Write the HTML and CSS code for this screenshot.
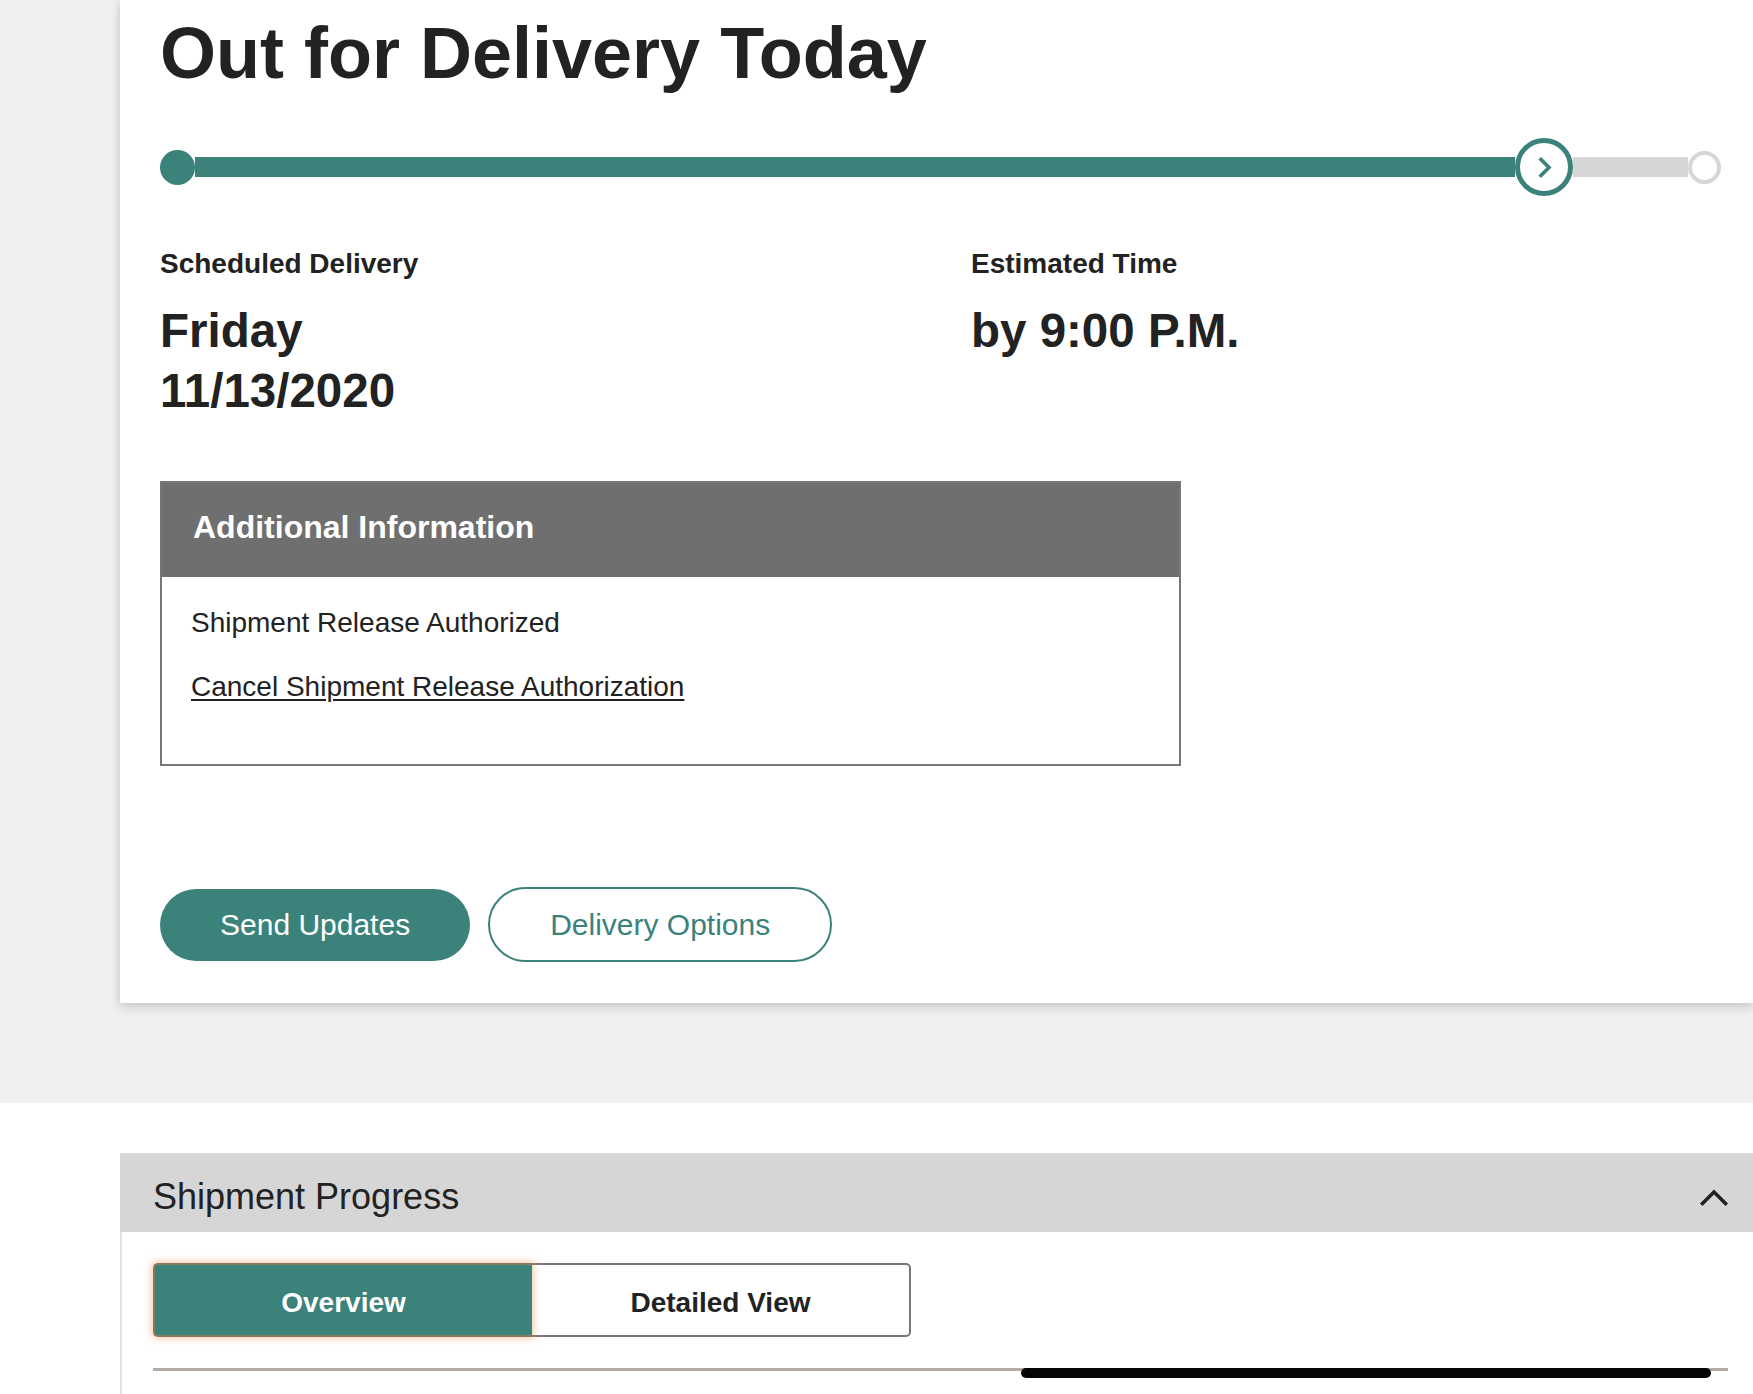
FILE: index.html
```html
<!DOCTYPE html>
<html lang="en">
<head>
<meta charset="utf-8">
<title>Track Shipment</title>
<link rel="stylesheet" href="styles.css">
</head>
<body>
  <div class="top-band">
    <section class="status-card">
      <h1 class="status-title">Out for Delivery Today</h1>

      <div class="tracker">
        <span class="dot dot-start"></span>
        <span class="bar bar-done"></span>
        <span class="dot dot-current">
          <svg class="dot-chevron" viewBox="0 0 48 48" width="48" height="48" aria-hidden="true">
            <polyline points="21,16.5 29,24.5 21,32.5" fill="none" stroke="#3a827a" stroke-width="3.6" stroke-linecap="square" stroke-linejoin="miter"/>
          </svg>
        </span>
        <span class="bar bar-todo"></span>
        <span class="dot dot-end"></span>
      </div>

      <div class="delivery-info">
        <div class="info-col">
          <h2 class="info-label">Scheduled Delivery</h2>
          <p class="info-value">Friday<br>11/13/2020</p>
        </div>
        <div class="info-col">
          <h2 class="info-label">Estimated Time</h2>
          <p class="info-value">by 9:00 P.M.</p>
        </div>
      </div>

      <div class="notice">
        <div class="notice-head">Additional Information</div>
        <div class="notice-body">
          <p class="notice-text">Shipment Release Authorized</p>
          <p class="notice-text notice-link-row"><a class="notice-link" href="#">Cancel Shipment Release Authorization</a></p>
        </div>
      </div>

      <div class="actions">
        <button class="btn btn-primary" type="button">Send Updates</button>
        <button class="btn btn-outline" type="button">Delivery Options</button>
      </div>
    </section>
  </div>

  <section class="progress-section">
    <div class="accordion">
      <div class="accordion-head">
        <span class="accordion-title">Shipment Progress</span>
        <svg class="accordion-icon" viewBox="0 0 30 20" width="30" height="20" aria-hidden="true">
          <polyline points="3.5,15.5 15,4 26.5,15.5" fill="none" stroke="#222" stroke-width="3.6" stroke-linecap="square" stroke-linejoin="miter"/>
        </svg>
      </div>
      <div class="accordion-body">
        <div class="tabs">
          <button class="tab tab-active" type="button">Overview</button>
          <button class="tab tab-plain" type="button">Detailed View</button>
        </div>
        <div class="track"><div class="thumb"></div></div>
      </div>
    </div>
  </section>
</body>
</html>
```

FILE: styles.css
```css
html, body {
  margin: 0;
  padding: 0;
  overflow: hidden;
}

body {
  background: #ffffff;
  color: #222222;
  font-family: "Liberation Sans", Arial, Helvetica, sans-serif;
}

/* grey band holding the status card */
.top-band {
  background: #f0f0ee;
  padding: 0 0 100px 120px;
}

.status-card {
  background: #ffffff;
  box-shadow: 0 5px 10px rgba(0, 0, 0, 0.14), -2px 0 6px rgba(0, 0, 0, 0.05);
  padding: 13px 32px 41px 40px;
}

.status-title {
  margin: 0;
  font-size: 72px;
  line-height: 80px;
  font-weight: 700;
  color: #222222;
}

/* progress tracker */
.tracker {
  margin-top: 44px;
  height: 60px;
  display: flex;
  align-items: center;
}

.dot {
  flex: none;
  box-sizing: border-box;
  border-radius: 50%;
}

.dot-start {
  width: 35px;
  height: 35px;
  background: #3a827a;
}

.bar {
  height: 20px;
}

.bar-done {
  flex: 1;
  background: #3a827a;
}

.bar-todo {
  flex: none;
  width: 115px;
  background: #d6d6d6;
}

.dot-current {
  width: 58px;
  height: 58px;
  border: 5px solid #3a827a;
  background: #ffffff;
  display: flex;
}

.dot-chevron {
  display: block;
}

.dot-end {
  width: 33px;
  height: 33px;
  border: 4px solid #d6d6d6;
  background: #ffffff;
}

/* scheduled delivery details */
.delivery-info {
  margin-top: 51px;
  display: grid;
  grid-template-columns: 811px 1fr;
}

.info-label {
  margin: 0;
  font-size: 28px;
  line-height: 32px;
  font-weight: 700;
}

.info-value {
  margin: 21px 0 0;
  font-size: 47.5px;
  line-height: 60px;
  font-weight: 700;
}

/* additional information box */
.notice {
  margin-top: 60px;
  width: 1021px;
  box-sizing: border-box;
  border: 2px solid #777777;
}

.notice-head {
  background: #6f6f6f;
  color: #ffffff;
  font-size: 32px;
  line-height: 36px;
  font-weight: 700;
  padding: 26px 29px 32px 31px;
}

.notice-body {
  padding: 30px 29px 61px 29px;
}

.notice-text {
  margin: 0;
  font-size: 28px;
  line-height: 32px;
}

.notice-link-row {
  margin-top: 32px;
}

.notice-link {
  color: #222222;
  text-decoration: underline;
  text-underline-offset: 3px;
  text-decoration-thickness: 2px;
}

/* buttons */
.actions {
  margin-top: 121px;
  display: flex;
  align-items: center;
  gap: 18px;
}

.btn {
  font-family: inherit;
  font-size: 30px;
  display: inline-flex;
  align-items: center;
  justify-content: center;
  box-sizing: border-box;
  border-radius: 40px;
  padding: 0 60px;
  cursor: pointer;
}

.btn-primary {
  height: 72px;
  border: none;
  background: #3a827a;
  color: #ffffff;
}

.btn-outline {
  height: 75px;
  border: 2px solid #3a827a;
  background: #ffffff;
  color: #3a827a;
}

/* shipment progress accordion */
.progress-section {
  padding: 50px 0 0 120px;
}

.accordion-head {
  height: 79px;
  box-sizing: border-box;
  background: #d6d6d6;
  display: flex;
  align-items: center;
  justify-content: space-between;
  padding: 9px 24px 0 33px;
}

.accordion-title {
  font-size: 36px;
  color: #222222;
}

.accordion-icon {
  display: block;
  margin-top: 2px;
}

.accordion-body {
  border-left: 2px solid #e2e2e2;
  padding: 31px 25px 40px 31px;
}

.tabs {
  display: flex;
}

.tab {
  font-family: inherit;
  font-size: 28px;
  font-weight: 700;
  height: 74px;
  box-sizing: border-box;
  padding: 6px 0 0;
  cursor: pointer;
}

.tab-active {
  width: 379px;
  background: #3a827a;
  color: #ffffff;
  border: 2px solid #8a7a5c;
  border-right: none;
  border-radius: 5px 0 0 5px;
  box-shadow: 0 0 7px 2px rgba(228, 146, 70, 0.45);
  position: relative;
  z-index: 1;
}

.tab-plain {
  width: 379px;
  background: #ffffff;
  color: #222222;
  border: 2px solid #777777;
  border-left: none;
  border-radius: 0 5px 5px 0;
}

.track {
  margin-top: 31px;
  height: 3px;
  background: #b6ada2;
  position: relative;
}

.thumb {
  position: absolute;
  left: 868px;
  top: 0;
  width: 690px;
  height: 10px;
  border-radius: 5px;
  background: #060606;
}
```
